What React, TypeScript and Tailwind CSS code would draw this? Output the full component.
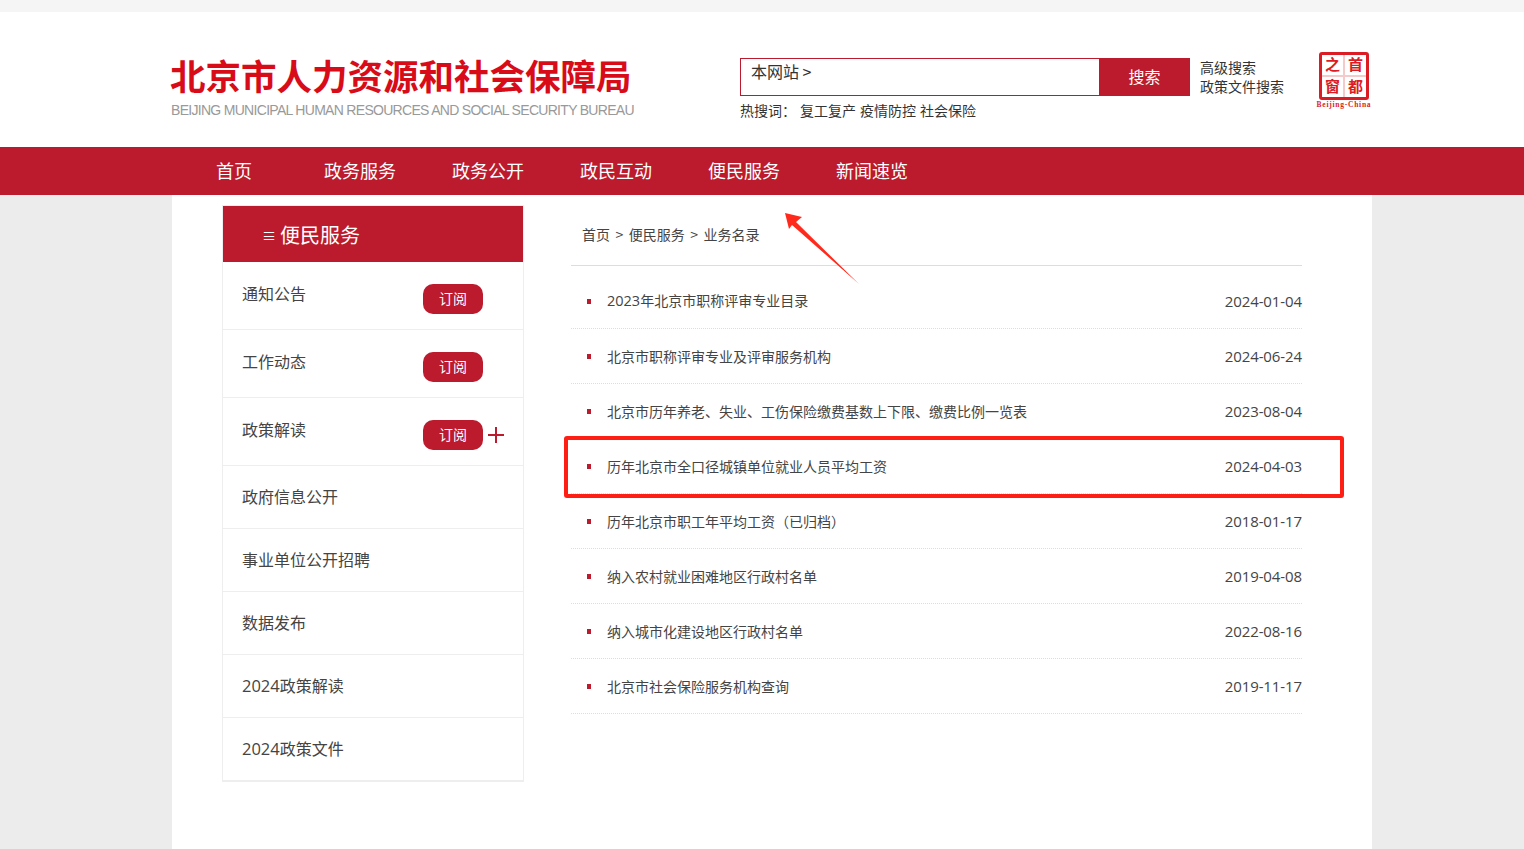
import React from 'react'

const FONT = "font-['Noto_Sans_CJK_SC','Noto_Sans',sans-serif]"
const DIGITS = "font-['Open_Sans','Noto_Sans_CJK_SC',sans-serif]"

const navItems = ['首页', '政务服务', '政务公开', '政民互动', '便民服务', '新闻速览']

const sideItems = [
  { name: '通知公告', subscribe: true },
  { name: '工作动态', subscribe: true },
  { name: '政策解读', subscribe: true, expand: true },
  { name: '政府信息公开' },
  { name: '事业单位公开招聘' },
  { name: '数据发布' },
  { name: '政策解读', year: '2024' },
  { name: '政策文件', year: '2024' },
]

const listItems = [
  { year: '2023', title: '年北京市职称评审专业目录', date: '2024-01-04' },
  { title: '北京市职称评审专业及评审服务机构', date: '2024-06-24' },
  { title: '北京市历年养老、失业、工伤保险缴费基数上下限、缴费比例一览表', date: '2023-08-04' },
  { title: '历年北京市全口径城镇单位就业人员平均工资', date: '2024-04-03' },
  { title: '历年北京市职工年平均工资（已归档）', date: '2018-01-17' },
  { title: '纳入农村就业困难地区行政村名单', date: '2019-04-08' },
  { title: '纳入城市化建设地区行政村名单', date: '2022-08-16' },
  { title: '北京市社会保险服务机构查询', date: '2019-11-17' },
]

function Seal() {
  return (
    <div className="flex flex-col items-center">
      <div className="grid h-[48px] w-[50px] grid-cols-2 grid-rows-2 gap-[2px] rounded-[3px] border-[3px] border-[#dc1c24] bg-[#f6c9cb] text-center font-['Liberation_Serif','Noto_Sans_CJK_SC',serif] text-[15px] leading-[20px] font-bold text-[#dc1c24]">
        <span className="bg-white">之</span>
        <span className="bg-white">首</span>
        <span className="bg-white">窗</span>
        <span className="bg-white">都</span>
      </div>
      <span className="mt-[1px] -mx-[3px] font-['Liberation_Serif',serif] text-[7.5px] leading-[8px] font-bold tracking-[0.75px] whitespace-nowrap text-[#dc1c24]">
        Beijing-China
      </span>
    </div>
  )
}

function Header() {
  return (
    <header className="h-[135px] bg-white">
      <div className="ml-[172px] flex w-[1200px]">
        <div className="w-[568px] pt-[38px]">
          <div className="-ml-[2px] text-[35.5px] leading-[50px] font-bold whitespace-nowrap text-[#d80c18]">
            北京市人力资源和社会保障局
          </div>
          <div className="mt-[2px] -ml-[1px] font-['Liberation_Sans',sans-serif] text-[14px] leading-[16px] tracking-[-0.7px] whitespace-nowrap text-[#999999]">
            BEIJING MUNICIPAL HUMAN RESOURCES AND SOCIAL SECURITY BUREAU
          </div>
        </div>
        <div className="w-[450px] pt-[46px]">
          <div className="flex h-[38px]">
            <div className="flex-1 border border-[#bc1a2d] pl-[10px] text-[16px] leading-[24px] text-[#333333]">
              本网站 &gt;
            </div>
            <button className="-ml-px w-[91px] bg-[#bc1a2d] pb-[2px] text-[16px] text-white">搜索</button>
          </div>
          <div className="mt-[4px] flex text-[14px] leading-[20px] text-[#333333]">
            <span className="w-[60px]">热搜词：</span>
            <span className="mr-[4px]">复工复产</span>
            <span className="mr-[4px]">疫情防控</span>
            <span>社会保险</span>
          </div>
        </div>
        <div className="w-[126px] pt-[45px] pl-[10px] text-[14px] leading-[20px] text-[#333333]">
          <div className="mb-[-1px]">高级搜索</div>
          <div>政策文件搜索</div>
        </div>
        <div className="pt-[40px] pl-[3px]">
          <Seal />
        </div>
      </div>
    </header>
  )
}

function Nav() {
  return (
    <nav className="h-[48px] bg-[#bc1a2d]">
      <ul className="ml-[172px] flex w-[1200px] gap-[56px] pl-[44px] text-[18px] leading-[46px] text-white">
        {navItems.map((item, index) => (
          <li key={item} className={index === 0 ? 'w-[52px]' : ''}>
            {item}
          </li>
        ))}
      </ul>
    </nav>
  )
}

function Sidebar() {
  return (
    <aside className="w-[302px] self-start border border-[#eeeeee]">
      <div className="flex h-[56px] items-center bg-[#bc1a2d] pt-[2px] pl-[39px] text-white">
        <span className="mr-[4px] text-[14px]">≡</span>
        <span className="text-[20px]">便民服务</span>
      </div>
      <ul>
        {sideItems.map((item) => (
          <li
            key={(item.year ?? '') + item.name + (item.subscribe ? '-sub' : '')}
            className={`relative flex border-b border-[#eeeeee] pl-[19px] text-[16px] text-[#444444] ${
              item.subscribe ? 'h-[68px]' : item.year ? 'h-[63px] items-center' : 'h-[63px] items-center pb-[2px]'
            }`}
          >
            <span className={item.subscribe ? 'mt-[19px] leading-[24px]' : ''}>
              {item.year && <span className={`${DIGITS} text-[16.5px]`}>{item.year}</span>}
              {item.name}
            </span>
            {item.subscribe && (
              <span className="mt-[22px] mr-[40px] ml-auto flex h-[30px] w-[60px] items-center justify-center rounded-[10px] bg-[#bc1a2d] pb-[2px] text-[14px] text-white">
                订阅
              </span>
            )}
            {item.expand && (
              <svg className="absolute top-[28px] right-[18px]" width="18" height="18" viewBox="0 0 18 18">
                <path d="M9 1v16M1 9h16" stroke="#bc1a2d" strokeWidth="2" fill="none" />
              </svg>
            )}
          </li>
        ))}
      </ul>
    </aside>
  )
}

function Content() {
  return (
    <section className="ml-[47px] w-[731px]">
      <div className="box-content flex h-[60px] items-center gap-[5.5px] border-b border-[#dddddd] pb-0 pl-[11px] text-[14px] leading-[18px] text-[#444444]">
        <span className="mb-[2px]">首页</span>
        <span className="mb-[2px]">&gt;</span>
        <span className="mb-[2px]">便民服务</span>
        <span className="mb-[2px]">&gt;</span>
        <span className="mb-[2px]">业务名录</span>
      </div>
      <ul className="pt-[8px]">
        {listItems.map((item) => (
          <li
            key={item.title}
            className="flex h-[55px] items-center border-b border-dotted border-[#dddddd] pl-[16px] text-[14px] text-[#444444]"
          >
            <span className="mr-[16px] h-[5px] w-[4px] bg-[#bc1a2d]" />
            <span className="flex-1">
              {item.year && <span className={`${DIGITS} text-[14.5px]`}>{item.year}</span>}
              {item.title}
            </span>
            <span className={`${DIGITS} text-[15px] tracking-[-0.1px]`}>{item.date}</span>
          </li>
        ))}
      </ul>
    </section>
  )
}

export default function App() {
  return (
    <div className={`relative min-h-screen bg-[#ececec] ${FONT}`}>
      <div className="h-[12px] bg-[#f5f5f5]" />
      <Header />
      <Nav />
      <main className="ml-[172px] flex h-[654px] w-[1200px] bg-white pt-[10px] pl-[50px]">
        <Sidebar />
        <Content />
      </main>

      {/* annotations drawn over the page */}
      <div className="absolute top-[436px] left-[564px] h-[62px] w-[780px] rounded-[3px] border-4 border-[#ff1e14]" />
      <svg className="absolute top-0 left-0" width="1524" height="849" viewBox="0 0 1524 849" fill="none">
        <polygon points="785,213 802,217 796,222 859,284 792,225 789,229" fill="#ff2a1c" />
      </svg>
    </div>
  )
}
